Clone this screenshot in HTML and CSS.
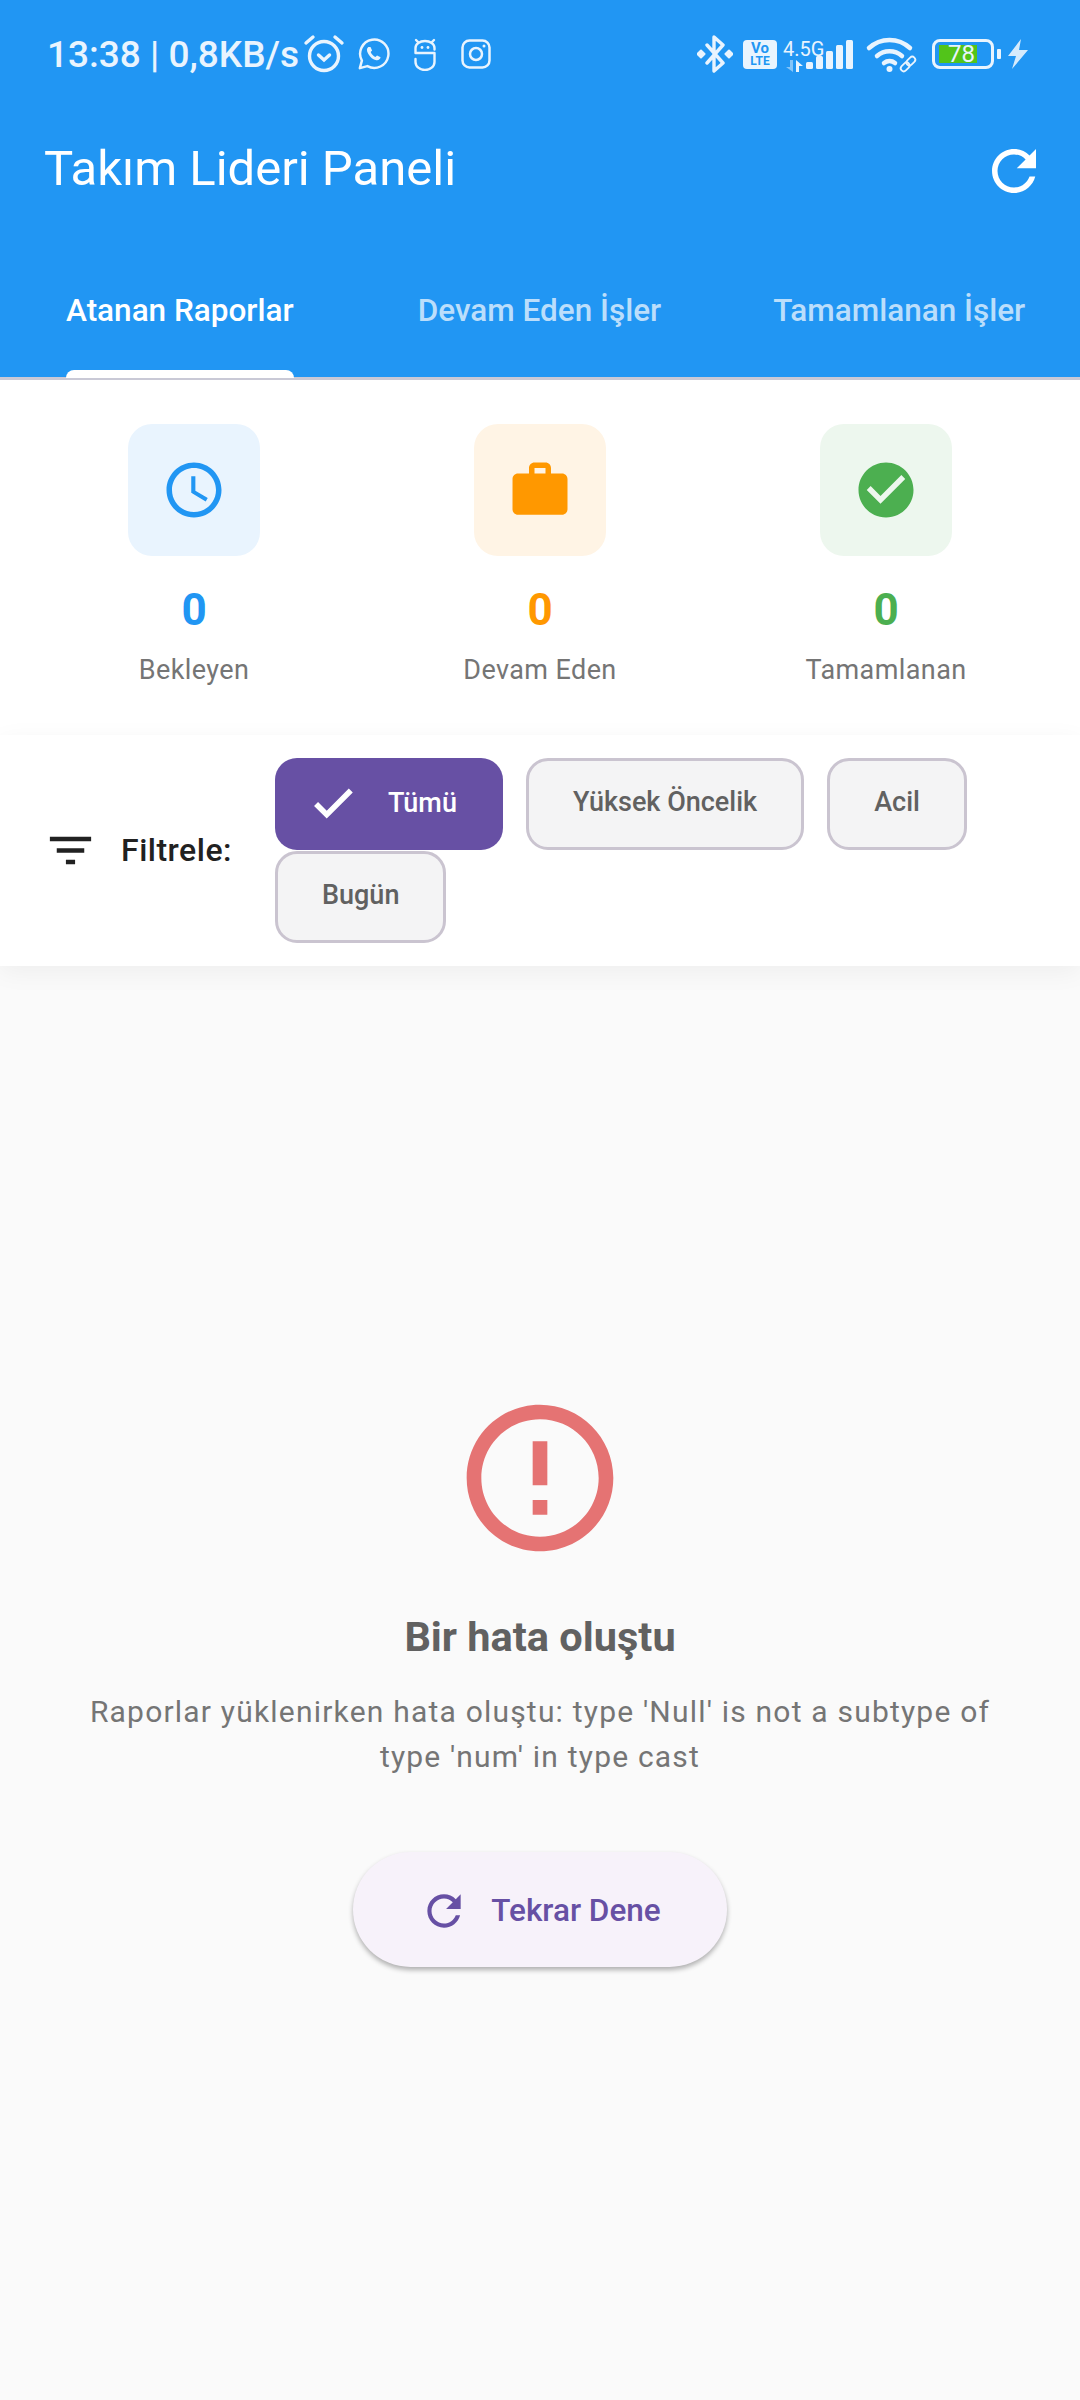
FILE: index.html
```html
<!DOCTYPE html>
<html lang="tr">
<head>
  <meta charset="UTF-8" />
  <title>Takım Lideri Paneli</title>
  <link rel="stylesheet" href="styles.css">
</head>
<body>
  <header class="appbar">
    <div class="statusbar">
      <span class="status-time">13:38 | 0,8KB/s</span>
      <svg class="st-alarm" width="42" height="40" viewBox="0 0 42 40" fill="none" stroke="currentColor" stroke-width="3.4" stroke-linecap="round"><circle cx="21" cy="22" r="14.5"/><path d="M3 9l7-6M39 9l-7-6"/><path d="M15.5 21l5.5 5 5.5-5"/></svg>
      <svg class="st-whatsapp" width="34" height="34" viewBox="0 0 36 36" fill="none" stroke="currentColor" stroke-width="2.6"><path d="M3 33l2.2-8A15 15 0 1 1 11 30.8z" stroke-linejoin="round"/><path d="M12 10.5c-2 1.5-2 4 0 7.5s5 6 8.500 6.500c2.500.3 4-1 4.500-3l-3.800-2-1.700 1.800c-2-.8-4-2.800-5-5.300l1.500-1.700-1.700-3.800z" fill="currentColor" stroke="none"/></svg>
      <svg class="st-head" width="24" height="34" viewBox="0 0 24 34" fill="none" stroke="currentColor" stroke-width="2.4" stroke-linecap="round" stroke-linejoin="round"><path d="M21.500 12.500V11a9.500 7 0 0 0-19 0v5h19v9a9.500 8 0 0 1-19 0v-3"/><path d="M3 3l2 2M21 3l-2 2"/><circle cx="9" cy="10.500" r="1.400" fill="currentColor" stroke="none"/><circle cx="15" cy="10.500" r="1.400" fill="currentColor" stroke="none"/></svg>
      <svg class="st-insta" width="30" height="30" viewBox="0 0 30 30" fill="none" stroke="currentColor" stroke-width="2.500"><rect x="1.500" y="1.500" width="27" height="27" rx="7"/><circle cx="15" cy="15" r="6"/><circle cx="23" cy="7" r="1.500" fill="currentColor" stroke="none"/></svg>
      <span class="status-gap"></span>
      <svg class="st-bt" width="36" height="38" viewBox="0 0 36 38" fill="none" stroke="currentColor" stroke-width="3.400" stroke-linejoin="round" stroke-linecap="round"><path d="M10 10l16 18-9 8V2l9 8-16 18"/><g fill="currentColor" stroke="none"><rect x="0.500" y="15.500" width="7" height="7" rx="1" transform="rotate(45 4 19)"/><rect x="28.500" y="15.500" width="7" height="7" rx="1" transform="rotate(45 32 19)"/></g></svg>
      <span class="st-volte"><span class="st-vo">Vo</span><span>LTE</span></span>
      <span class="st-net">
        <span class="st-45">4.5G</span>
        <svg width="17" height="12" viewBox="0 0 17 12" fill="currentColor"><path d="M7 0v12L0 7h4V0z" opacity=".5"/><path d="M10 0l7 6h-4v6h-3z"/></svg>
      </span>
      <svg class="st-signal" width="47" height="29" viewBox="0 0 47 29" fill="currentColor"><rect x="0" y="22" width="7" height="7" rx="1.500"/><rect x="10" y="16" width="7" height="13" rx="1.500"/><rect x="20" y="11" width="7" height="18" rx="1.500"/><rect x="30" y="5" width="7" height="24" rx="1.500"/><rect x="40" y="0" width="7" height="29" rx="1.500"/></svg>
      <svg class="st-wifi" width="50" height="35" viewBox="0 0 50 35" fill="none" stroke="currentColor" stroke-linecap="round"><path d="M2 10a30 30 0 0 1 41 0" stroke-width="4.500"/><path d="M10 18a19 19 0 0 1 25 0" stroke-width="4.500"/><path d="M17 25a9 9 0 0 1 11 0" stroke-width="4.500"/><circle cx="22.500" cy="31" r="3" fill="currentColor" stroke="none"/><g stroke-width="1.800" transform="rotate(-45 41 26)"><rect x="32" y="23" width="10" height="6" rx="3"/><rect x="40" y="23" width="10" height="6" rx="3"/></g></svg>
      <span class="st-battery"><span class="st-charge">78</span></span>
      <span class="st-nub"></span>
      <svg class="st-bolt" width="20" height="30" viewBox="0 0 20 30" fill="currentColor"><path d="M13 0L0 17h8l-4 13L20 11h-9z"/></svg>
    </div>
    <div class="toolbar">
      <h1 class="title">Takım Lideri Paneli</h1>
      <svg class="refresh" width="66" height="66" viewBox="0 0 24 24" fill="#fff"><path d="M17.65 6.35C16.2 4.9 14.21 4 12 4c-4.42 0-7.99 3.58-7.99 8s3.57 8 7.99 8c3.73 0 6.84-2.55 7.73-6h-2.08c-.82 2.33-3.04 4-5.65 4-3.31 0-6-2.69-6-6s2.69-6 6-6c1.66 0 3.14.69 4.22 1.78L13 11h7V4l-2.35 2.35z"/></svg>
    </div>
    <nav class="tabs">
      <a class="tab active">Atanan Raporlar</a>
      <a class="tab">Devam Eden İşler</a>
      <a class="tab">Tamamlanan İşler</a>
    </nav>
  </header>

  <section class="stats">
    <div class="stat stat-blue">
      <div class="stat-icon"><svg width="66" height="66" viewBox="0 0 24 24" fill="currentColor"><path d="M11.99 2C6.47 2 2 6.48 2 12s4.47 10 9.99 10C17.52 22 22 17.52 22 12S17.52 2 11.99 2zM12 20c-4.42 0-8-3.58-8-8s3.58-8 8-8 8 3.58 8 8-3.58 8-8 8zm.5-13H11v6l5.25 3.15.75-1.23-4.5-2.67z"/></svg></div>
      <div class="stat-num">0</div>
      <div class="stat-label">Bekleyen</div>
    </div>
    <div class="stat stat-orange">
      <div class="stat-icon"><svg width="66" height="66" viewBox="0 0 24 24" fill="currentColor"><path d="M20 6h-4V4c0-1.11-.89-2-2-2h-4c-1.11 0-2 .89-2 2v2H4c-1.11 0-1.99.89-1.99 2L2 19c0 1.11.89 2 2 2h16c1.11 0 2-.89 2-2V8c0-1.11-.89-2-2-2zm-6 0h-4V4h4v2z"/></svg></div>
      <div class="stat-num">0</div>
      <div class="stat-label">Devam Eden</div>
    </div>
    <div class="stat stat-green">
      <div class="stat-icon"><svg width="66" height="66" viewBox="0 0 24 24" fill="currentColor"><path d="M12 2C6.48 2 2 6.48 2 12s4.48 10 10 10 10-4.48 10-10S17.52 2 12 2zm-2 15l-5-5 1.41-1.41L10 14.17l7.59-7.59L19 8l-9 9z"/></svg></div>
      <div class="stat-num">0</div>
      <div class="stat-label">Tamamlanan</div>
    </div>
  </section>

  <section class="filter">
    <svg class="filter-icon" width="55" height="55" viewBox="0 0 24 24" fill="#212121"><path d="M10 18h4v-2h-4v2zM3 6v2h18V6H3zm3 7h12v-2H6v2z"/></svg>
    <span class="filter-label">Filtrele:</span>
    <div class="chips">
      <button class="chip chip-on"><svg width="50" height="50" viewBox="0 0 24 24" fill="#fff" stroke="#fff" stroke-width=".7"><path d="M9 16.17L4.83 12l-1.42 1.41L9 19 21 7l-1.41-1.41z"/></svg>Tümü</button>
      <button class="chip">Yüksek Öncelik</button>
      <button class="chip">Acil</button>
      <button class="chip">Bugün</button>
    </div>
  </section>

  <main class="content">
    <svg width="176" height="176" viewBox="0 0 24 24" fill="#e57373"><path d="M11 15h2v2h-2zm0-8h2v6h-2zm.99-5C6.47 2 2 6.48 2 12s4.47 10 9.99 10C17.52 22 22 17.52 22 12S17.520 2 11.99 2zM12 20c-4.42 0-8-3.58-8-8s3.58-8 8-8 8 3.58 8 8-3.58 8-8 8z"/></svg>
    <h2 class="err-title">Bir hata oluştu</h2>
    <p class="err-text">Raporlar yüklenirken hata oluştu: type 'Null' is not a subtype of type 'num' in type cast</p>
    <button class="retry"><svg width="50" height="50" viewBox="0 0 24 24" fill="currentColor"><path d="M17.65 6.35C16.2 4.9 14.21 4 12 4c-4.42 0-7.99 3.58-7.99 8s3.57 8 7.99 8c3.73 0 6.84-2.55 7.73-6h-2.08c-.82 2.33-3.04 4-5.65 4-3.31 0-6-2.69-6-6s2.69-6 6-6c1.66 0 3.14.69 4.22 1.78L13 11h7V4l-2.35 2.35z"/></svg>Tekrar Dene</button>
  </main>
</body>
</html>
```

FILE: styles.css
```css
:root {
  --blue: #2196f3;
  --orange: #ff9800;
  --green: #4caf50;
  --purple: #6750a4;
  --status: #e9f4fe;
}

* {
  box-sizing: border-box;
  font-family: Roboto, sans-serif;
}

body {
  margin: 0;
  width: 1080px;
  height: 2400px;
  display: flex;
  flex-direction: column;
  background: #fafafa;
}

.appbar {
  background: var(--blue);
  color: #fff;
}

.statusbar {
  height: 108px;
  padding-left: 47px;
  display: flex;
  align-items: center;
  color: var(--status);
}

.status-time {
  font-size: 37px;
  font-weight: 500;
  white-space: nowrap;
  width: 256px;
}

.st-whatsapp { margin-left: 12px; }
.st-head { margin-left: 22px; }
.st-insta { margin-left: 24px; }
.status-gap { flex: 1; }
.st-bt { margin-right: 10px; }

.st-volte {
  width: 34px;
  height: 29px;
  margin-right: 6px;
  background: var(--status);
  border-radius: 4px;
  color: var(--blue);
  font-size: 12px;
  font-weight: 700;
  line-height: 12px;
  display: flex;
  flex-direction: column;
  align-items: center;
  justify-content: center;
}

.st-vo { font-size: 15px; line-height: 14px; }

.st-net {
  width: 40px;
  height: 33px;
  display: flex;
  flex-direction: column;
  align-items: flex-start;
  margin-right: -17px;
  margin-top: 3px;
  position: relative;
  z-index: 1;
}

.st-net svg { margin-top: 1px; margin-left: 3px; }

.st-45 {
  font-size: 20px;
  line-height: 20px;
  white-space: nowrap;
}

.st-signal { margin-top: 1px; }
.st-wifi { margin-left: 14px; margin-top: 2px; overflow: visible; }

.st-battery {
  width: 62px;
  height: 30px;
  margin-left: 15px;
  border: 3px solid var(--status);
  border-radius: 8px;
  padding: 3px 4px;
  display: flex;
}

.st-charge {
  width: 38px;
  padding-right: 2px;
  background: #52c41a;
  color: var(--status);
  font-size: 24px;
  line-height: 18px;
  text-align: right;
}

.st-nub {
  width: 4px;
  height: 10px;
  margin-left: 3px;
  background: var(--status);
  border-radius: 1px;
}

.st-bolt { margin-left: 7px; margin-right: 52px; opacity: .9; }

.toolbar {
  height: 126px;
  padding: 0 33px 0 44px;
  display: flex;
  align-items: center;
  justify-content: space-between;
}

.title {
  margin: 0 0 6px;
  font-size: 49px;
  font-weight: 400;
}

.tabs {
  height: 146px;
  padding: 0 0 3px 66px;
  border-bottom: 3px solid #c9c9d6;
  display: flex;
  align-items: center;
  white-space: nowrap;
}

.tab {
  position: relative;
  padding-top: 13px;
  font-size: 31.5px;
  font-weight: 500;
  color: #bbdefb;
}

.tab:nth-child(2) { margin-left: 124px; }
.tab:nth-child(3) { margin-left: 112px; }
.tab.active { color: #fff; }

.tab.active::after {
  content: "";
  position: absolute;
  left: 0;
  right: 0;
  bottom: -49px;
  height: 8px;
  background: #fff;
  border-radius: 8px 8px 0 0;
}

.stats {
  height: 355px;
  padding: 44px 21px 0;
  background: #fff;
  display: grid;
  grid-template-columns: repeat(3, 1fr);
}

.stat {
  display: flex;
  flex-direction: column;
  align-items: center;
}

.stat-icon {
  width: 132px;
  height: 132px;
  border-radius: 24px;
  display: flex;
  align-items: center;
  justify-content: center;
}

.stat-blue { color: var(--blue); }
.stat-blue .stat-icon { background: #e9f4fe; }
.stat-orange { color: var(--orange); }
.stat-orange .stat-icon { background: #fff4e5; }
.stat-green { color: var(--green); }
.stat-green .stat-icon { background: #edf7ee; }

.stat-num {
  margin-top: 28px;
  font-size: 44px;
  line-height: 52px;
  font-weight: 700;
}

.stat-label {
  margin-top: 18px;
  font-size: 27px;
  line-height: 32px;
  letter-spacing: .4px;
  color: #757575;
}

.filter {
  height: 231px;
  padding: 22px 0 23px 43px;
  background: #fff;
  box-shadow: 0 6px 24px rgba(0,0,0,0.05);
  display: flex;
  align-items: center;
}

.filter-label {
  margin-left: 23px;
  width: 154px;
  font-size: 32px;
  letter-spacing: .5px;
  font-weight: 500;
  color: #212121;
}

.chips {
  width: 720px;
  display: flex;
  flex-wrap: wrap;
  gap: 1px 23px;
}

.chip {
  height: 92px;
  padding: 0 44px 4px;
  border: 3px solid #cac4d0;
  border-radius: 22px;
  background: #f4f4f5;
  color: #616161;
  font-size: 27px;
  font-weight: 500;
}

.chip-on {
  padding: 0 46px 2px 33px;
  border: none;
  background: var(--purple);
  color: #fff;
  display: flex;
  align-items: center;
  gap: 30px;
}

.content {
  flex: 1;
  padding-top: 424px;
  display: flex;
  flex-direction: column;
  align-items: center;
}

.err-title {
  margin: 44px 0 0;
  font-size: 41.5px;
  line-height: 54px;
  font-weight: 700;
  color: #616161;
}

.err-text {
  width: 920px;
  margin: 26px 0 0;
  font-size: 30px;
  line-height: 44.5px;
  letter-spacing: 1.2px;
  text-align: center;
  color: #757575;
}

.retry {
  width: 374px;
  height: 115px;
  margin-top: 73px;
  padding: 2px 0 0;
  border: none;
  border-radius: 58px;
  background: #f7f2fa;
  color: var(--purple);
  font-size: 31.5px;
  font-weight: 500;
  box-shadow: 0 3px 5px rgba(0,0,0,0.3);
  display: flex;
  align-items: center;
  justify-content: center;
  gap: 22px;
}
```
